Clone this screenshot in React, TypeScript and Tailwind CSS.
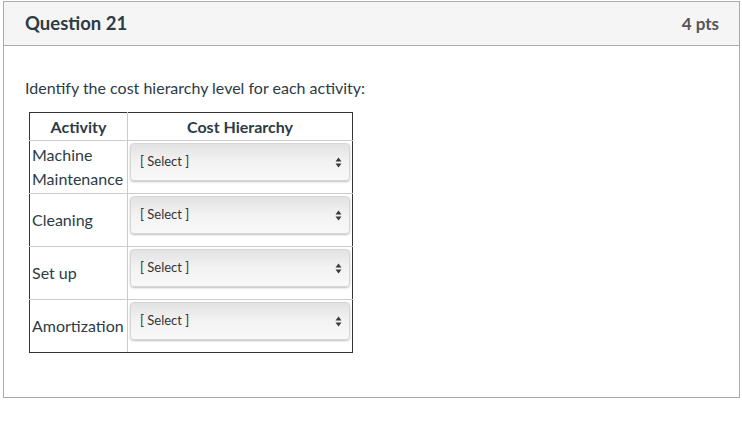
const rows = [
  { name: "Machine Maintenance" },
  { name: "Cleaning" },
  { name: "Set up" },
  { name: "Amortization" },
];

function UpDown() {
  return (
    <svg width="7" height="11" viewBox="0 0 7 11" className="shrink-0">
      <path d="M3.5 0.5 L6.5 4.5 L0.5 4.5 Z" fill="#3a3a3a" />
      <path d="M3.5 10.5 L6.5 6.5 L0.5 6.5 Z" fill="#3a3a3a" />
    </svg>
  );
}

function FakeSelect() {
  return (
    <div className="mb-[10px] flex h-[38px] w-full items-center justify-between rounded-[4px] border border-[#d6d6d6] bg-gradient-to-b from-[#e2e2e2] via-[#f3f3f3] to-[#f8f8f8] pl-[9px] pr-[7px] text-[13px] text-[#333] shadow-[0_1px_2px_rgba(0,0,0,0.25)]">
      <span>[ Select ]</span>
      <UpDown />
    </div>
  );
}

export default function App() {
  return (
    <div className="bg-white pl-[3px] pt-[1px]" style={{ fontFamily: "Lato, 'Open Sans', sans-serif" }}>
      <div className="w-[737px] border border-[#aaaaaa] text-[#2d3b45]">
        <div className="flex h-[44px] items-center justify-between border-b border-[#aaaaaa] bg-[#f5f5f5] pl-[21px] pr-[20px]">
          <h2 className="text-[18.5px] font-bold">Question 21</h2>
          <span className="text-[17px] font-bold text-[#555]">4 pts</span>
        </div>
        <div className="pl-[21px] pr-[21px] pb-[44px] pt-[31px]">
          <p className="text-[16px] leading-[22px]">Identify the cost hierarchy level for each activity:</p>
          <table className="ml-[4px] mt-[13px] w-[324px] border-collapse border border-[#333] text-[16px]">
            <thead>
              <tr className="h-[28px]">
                <th className="w-[98px] border border-[#ccc] border-t-[#333] border-l-[#333] font-bold">Activity</th>
                <th className="border border-[#ccc] border-t-[#333] border-r-[#333] font-bold">Cost Hierarchy</th>
              </tr>
            </thead>
            <tbody>
              {rows.map((r, i) => {
                const last = i === rows.length - 1;
                return (
                  <tr key={r.name}>
                    <td className={`border border-[#ccc] border-l-[#333] p-[2px] align-middle leading-[24px] ${last ? "border-b-[#333]" : ""}`}>{r.name}</td>
                    <td className={`border border-[#ccc] border-r-[#333] p-[2px] align-middle ${last ? "border-b-[#333]" : ""}`}>
                      <FakeSelect />
                    </td>
                  </tr>
                );
              })}
            </tbody>
          </table>
        </div>
      </div>
    </div>
  );
}
